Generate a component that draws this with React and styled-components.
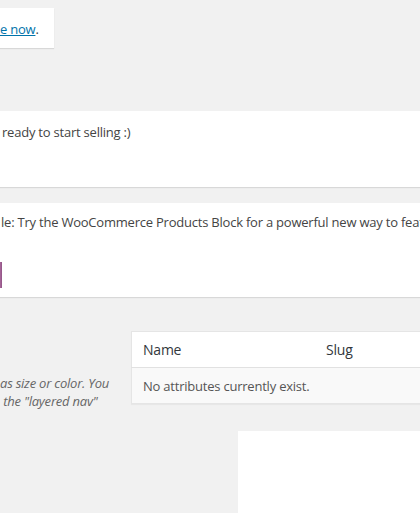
import React from 'react';
import styled, { createGlobalStyle } from 'styled-components';

const GlobalStyle = createGlobalStyle`
  html, body {
    margin: 0;
    padding: 0;
    background: #f1f1f1;
  }
  body {
    font-family: "Open Sans", "Liberation Sans", sans-serif;
    font-size: 13px;
    letter-spacing: -0.22px;
    color: #444;
    overflow: hidden;
  }
`;

const Page = styled.div`
  width: 420px;
  height: 513px;
  overflow: hidden;
  display: flex;
  flex-direction: column;
`;

const Notice = styled.div`
  background: #fff;
  box-shadow: 0 1px 1px 0 rgba(0, 0, 0, 0.1);
  margin-top: ${props => props.top}px;
  height: ${props => props.height}px;
  width: ${props => props.width || '440px'};
  flex-shrink: 0;
  box-sizing: border-box;
  display: flex;
  flex-direction: column;
  white-space: nowrap;
  overflow: hidden;
`;

const NoticeText = styled.p`
  margin: 0;
  padding-top: ${props => props.pad}px;
  padding-left: ${props => props.indent || 0}px;
  line-height: 18px;
`;

const Link = styled.a`
  color: #0073aa;
  text-decoration: underline;
`;

const PurpleButton = styled.span`
  display: block;
  margin-top: ${props => props.top}px;
  width: 2px;
  height: 26px;
  background: #a46497;
  border-right: 1px solid #96588a;
  box-sizing: border-box;
`;

const Section = styled.div`
  display: flex;
  align-items: flex-start;
  margin-top: 34px;
  flex-shrink: 0;
`;

const Description = styled.p`
  width: 131px;
  flex-shrink: 0;
  margin: 0;
  padding-top: 43px;
  font-style: italic;
  color: #666;
  line-height: 18px;
  white-space: pre;
`;

const Table = styled.table`
  width: 420px;
  flex-shrink: 0;
  border-collapse: collapse;
  border: 1px solid #e5e5e5;
  box-shadow: 0 1px 1px rgba(0, 0, 0, 0.04);
  background: #fff;
`;

const Th = styled.th`
  text-align: left;
  font-weight: 400;
  font-size: 14px;
  color: #32373c;
  padding: 0 11px;
  height: 35px;
  border-bottom: 1px solid #e1e1e1;
  width: ${props => props.width || 'auto'};
`;

const Td = styled.td`
  padding: 0 11px;
  height: 35px;
  background: #f9f9f9;
  color: #555;
`;

const BottomPanel = styled.div`
  margin-top: 21px;
  margin-left: 238px;
  flex: 1;
  background: #fff;
`;

const App = () => (
  <Page>
    <GlobalStyle />
    <Notice top={8} height={40} width="54px">
      <NoticeText pad={12}>
        <Link href="#">e now</Link>.
      </NoticeText>
    </Notice>

    <Notice top={63} height={76}>
      <NoticeText pad={12} indent={2}>ready to start selling :)</NoticeText>
    </Notice>

    <Notice top={16} height={94}>
      <NoticeText pad={10} indent={1}>
        le: Try the WooCommerce Products Block for a powerful new way to featu
      </NoticeText>
      <PurpleButton top={31} />
    </Notice>

    <Section>
      <Description>{'as size or color. You\n the "layered nav"'}</Description>
      <Table>
        <thead>
          <tr>
            <Th width="161px">Name</Th>
            <Th>Slug</Th>
          </tr>
        </thead>
        <tbody>
          <tr>
            <Td colSpan={2}>No attributes currently exist.</Td>
          </tr>
        </tbody>
      </Table>
    </Section>

    <BottomPanel />
  </Page>
);

export default App;
